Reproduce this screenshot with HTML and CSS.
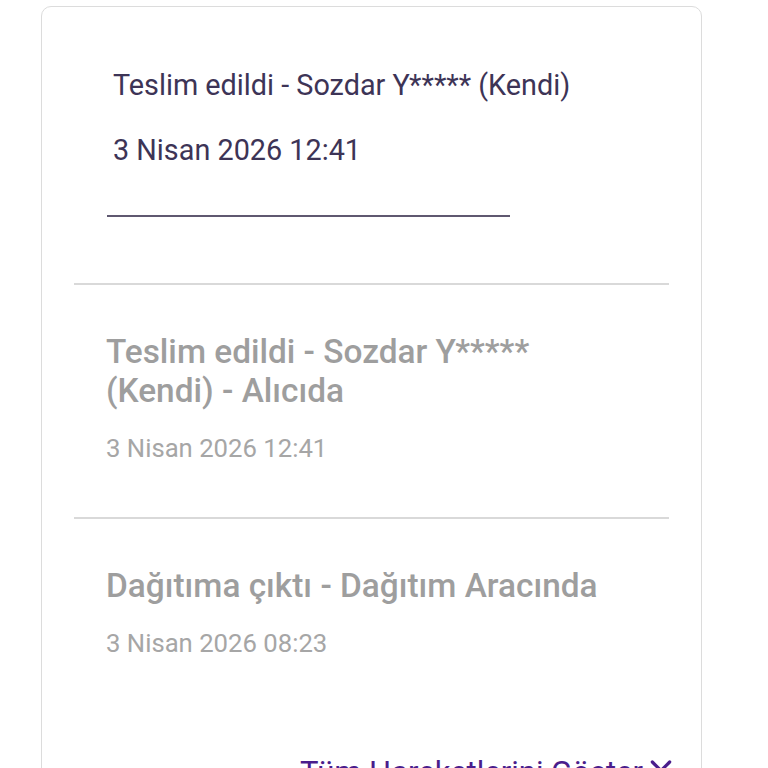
FILE: index.html
```html
<!DOCTYPE html>
<html>
<head>
    <meta charset="UTF-8">
    <title>Kargo Takip</title>
    <link rel="stylesheet" href="styles.css">
</head>
<body>
    <div class="tracking-card">
        <!-- Son durum -->
        <div class="current-status">
            <div class="current-title">Teslim edildi - Sozdar Y***** (Kendi)</div>
            <div class="current-date">3 Nisan 2026 12:41</div>
            <div class="current-line"></div>
        </div>

        <div class="divider"></div>

        <div class="history-item">
            <div class="history-title">Teslim edildi - Sozdar Y*****<br>(Kendi) - Alıcıda</div>
            <div class="history-date">3 Nisan 2026 12:41</div>
        </div>

        <div class="divider"></div>

        <div class="history-item">
            <div class="history-title">Dağıtıma çıktı - Dağıtım Aracında</div>
            <div class="history-date">3 Nisan 2026 08:23</div>
        </div>

        <div class="show-all">
            <span>Tüm Hareketlerini Göster</span>
            <svg class="chevron" width="32" height="32" viewBox="0 0 24 24">
                <path d="M5.5 9l6.5 6.5 6.5-6.5" fill="none" stroke="#4a1d8c" stroke-width="2.4" stroke-linecap="round" stroke-linejoin="round"/>
            </svg>
        </div>
    </div>
</body>
</html>
```

FILE: styles.css
```css
body {
    margin: 0;
    padding: 0;
    background-color: #fff;
    font-family: Roboto, "Liberation Sans", sans-serif;
}

.tracking-card {
    margin: 6px 0 0 41px;
    width: 659px;
    height: 900px;
    border: 1.5px solid #dcdcdc;
    border-radius: 10px;
}

.current-status {
    padding: 62px 0 0 71px;
}

.current-title {
    font-size: 28.8px;
    color: #3d3456;
    line-height: 32px;
}

.current-date {
    font-size: 28.8px;
    color: #3d3456;
    line-height: 32px;
    margin-top: 33px;
}

.current-line {
    width: 403px;
    height: 2px;
    background-color: #5f5870;
    margin: 49px 0 0 -6px;
}

.divider {
    height: 2px;
    background-color: #d9d9d9;
    margin: 0 32px;
}

.current-status + .divider {
    margin-top: 66px;
}

.history-item {
    padding: 47px 0 54px 64px;
}

.history-title {
    font-size: 33.4px;
    font-weight: 500;
    color: #9e9e9e;
    line-height: 39px;
}

.history-date {
    font-size: 25.7px;
    color: #a6a6a6;
    margin-top: 23px;
}

.show-all {
    display: flex;
    align-items: flex-start;
    justify-content: flex-end;
    gap: 2px;
    padding-right: 24px;
    margin-top: 42px;
    font-size: 31px;
    color: #4a1d8c;
}

.chevron {
    margin-top: -4px;
}
```
